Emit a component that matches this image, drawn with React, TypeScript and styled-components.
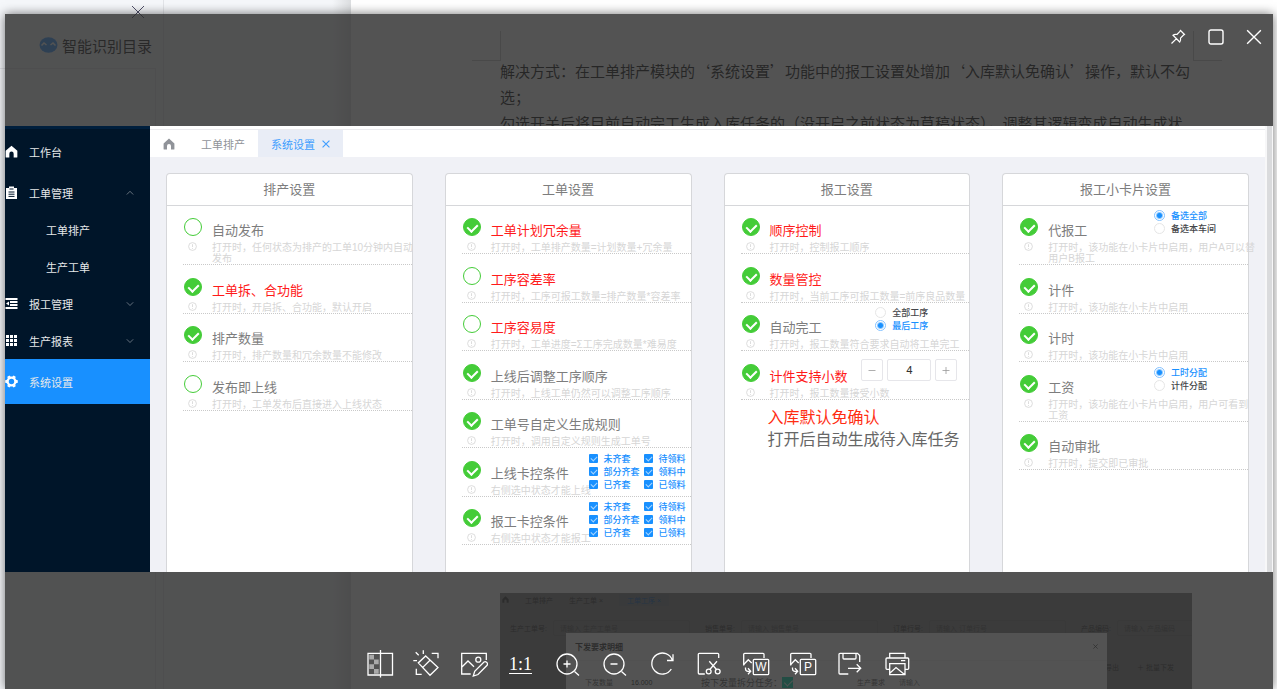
import React, { useState } from "react";
import styled, { createGlobalStyle, css } from "styled-components";

const GlobalStyle = createGlobalStyle`
  * { box-sizing: border-box; }
  body {
    margin: 0;
    background: #fff;
    font-family: "Liberation Sans", "Noto Sans CJK SC", sans-serif;
    overflow: hidden;
  }
  button, input { font: inherit; margin: 0; padding: 0; }
  button { border: 0; background: none; color: inherit; cursor: pointer; }
  h2, p, ul { margin: 0; padding: 0; font-weight: 400; }
  ul { list-style: none; }
`;

/* ---------- document editor behind the viewer ---------- */

const Screen = styled.div`
  position: relative;
  height: 100vh;
  overflow: hidden;
`;

const Editor = styled.div`
  display: flex;
  height: 100%;
`;

const Outline = styled.aside`
  flex: 0 0 164px;
  display: flex;
  flex-direction: column;
  background: #f5f7fa;
  border-right: 1px solid #e2e4e8;
`;

const OutlineTop = styled.div`
  height: 24px;
  display: flex;
  justify-content: flex-end;
  align-items: center;
  padding-right: 18px;
  color: #50506a;
  button { height: 14px; line-height: 0; }
`;

const OutlineHead = styled.div`
  height: 44px;
  display: flex;
  align-items: center;
  gap: 4px;
  padding: 0 0 2px 39px;
  font-size: 15px;
  color: #222;
`;

const OutlineBody = styled.div`
  flex: 1;
  margin-right: 7px;
  border-top: 1px solid #e2e4e8;
  border-right: 1px solid #e2e4e8;
`;

const Gutter = styled.div`
  flex: 0 0 187px;
  background: linear-gradient(to right, #f5f7fa 90%, #dcdee0);
`;

const Page = styled.article`
  flex: 1;
  min-width: 0;
  display: flex;
  flex-direction: column;
  justify-content: space-between;
  padding: 31px 85px 0 149px;
  background: #fff;
`;

const PageMarks = styled.div`
  display: flex;
  justify-content: space-between;
  height: 30px;
  margin: 0 -30px 0 -28px;
`;

const Mark = styled.span<{ $side: "left" | "right" }>`
  width: 29px;
  border-bottom: 1px solid #c8c8c8;
  ${(p) => (p.$side === "left" ? "border-right" : "border-left")}: 1px solid #c8c8c8;
`;

const DocText = styled.p`
  font: 15px/26px "Noto Sans CJK SC", sans-serif;
  color: #111;
  white-space: nowrap;
  margin-top: -3px;
`;

const Shot = styled.div`
  position: relative;
  height: 96px;
  overflow: hidden;
  background: #808080;
  font-size: 7px;
  color: #303030;
`;

const ShotTabs = styled.div`
  display: flex;
  align-items: center;
  height: 13px;
  padding-left: 2px;
  gap: 16px;
  span:last-child {
    padding: 1px 8px;
    color: #0c5cb0;
    background: #777b80;
  }
`;

const ShotForm = styled.div`
  display: grid;
  grid-template-columns: repeat(4, 188px);
  padding: 14px 0 0 3px;
`;

const ShotField = styled.label`
  display: flex;
  align-items: center;
  gap: 6px;
  span { width: 44px; text-align: right; }
  input {
    width: 137px;
    height: 16px;
    padding-left: 6px;
    border: 1px solid #747474;
    background: transparent;
    border-radius: 2px;
  }
  input::placeholder { color: #505050; }
`;

const ShotActions = styled.div`
  display: flex;
  justify-content: flex-end;
  gap: 18px;
  padding: 26px 18px 0 0;
`;

const Modal = styled.div`
  position: absolute;
  top: 40px;
  left: 66px;
  right: 85px;
  height: 80px;
  background: #fff;
`;

const ModalHead = styled.div`
  display: flex;
  justify-content: space-between;
  align-items: center;
  height: 28px;
  padding: 0 9px;
  border-bottom: 1px solid #f2f2f2;
  font-size: 8px;
  font-weight: 700;
  color: #333;
`;

const ModalBody = styled.div`
  display: flex;
  align-items: center;
  height: 42px;
  padding-left: 19px;
  color: #555;
`;

const ModalField = styled.label<{ $gap: number }>`
  display: flex;
  align-items: center;
  gap: ${(p) => p.$gap}px;
  input[type="text"] {
    width: 50px;
    border: 0;
    background: none;
    color: #222;
  }
`;

const SplitField = styled.label`
  display: flex;
  align-items: center;
  gap: 0;
  margin: 0 64px 0 20px;
  font-size: 9px;
  input {
    appearance: none;
    position: relative;
    width: 11px;
    height: 11px;
    background: #00e0b0;
  }
  input::after {
    content: "";
    position: absolute;
    left: 4px;
    top: 1px;
    width: 4px;
    height: 7px;
    border: solid #fff;
    border-width: 0 1px 1px 0;
    transform: rotate(45deg);
  }
`;

/* ---------- picture viewer ---------- */

const Viewer = styled.section`
  position: absolute;
  inset: 14px 4px 0 5px;
  display: flex;
  flex-direction: column;
  background: rgba(43, 43, 43, 0.81);
  box-shadow: 0 0 10px rgba(0, 0, 0, 0.55);
`;

const WindowBar = styled.header`
  flex: 0 0 112px;
  display: flex;
  justify-content: flex-end;
  align-items: flex-start;
  gap: 14px;
  padding: 11px 7px 0;
  color: #fff;
`;

const WindowButton = styled.button`
  width: 24px;
  height: 24px;
  display: grid;
  place-items: center;
`;

const ToolBar = styled.footer`
  flex: 0 0 117px;
  display: flex;
  justify-content: center;
  gap: 19px;
  padding: 78px 2px 0 0;
  color: #fff;
`;

const ToolButton = styled.button`
  width: 28px;
  height: 28px;
  display: grid;
  place-items: center;
`;

const Ratio = styled.span`
  font: 18px/18px "Liberation Serif", serif;
  border-bottom: 1px solid #fff;
`;

/* ---------- picture content: production system ---------- */

const Picture = styled.div`
  flex: 1;
  min-height: 0;
  display: flex;
  overflow: hidden;
  background: #fff;
`;

const SideNav = styled.nav`
  flex: 0 0 145px;
  background: #001529;
  border-top: 3px solid #001f3d;
`;

const NavItem = styled.a<{ $tall?: boolean; $sub?: boolean; $active?: boolean }>`
  display: flex;
  align-items: center;
  height: ${(p) => (p.$tall ? 45 : 37)}px;
  padding: 0 16px 0 ${(p) => (p.$sub ? 41 : 0)}px;
  font-size: 11px;
  color: #e6e8ea;
  text-decoration: none;
  background: ${(p) => (p.$active ? "#1890ff" : "transparent")};
`;

const NavIcon = styled.span`
  width: 24px;
  line-height: 0;
  color: #fff;
`;

const NavLabel = styled.span`
  flex: 1;
`;

const Main = styled.main`
  flex: 1;
  min-width: 0;
  display: flex;
  flex-direction: column;
  background: #f0f1f6;
`;

const TabBar = styled.div`
  flex: 0 0 31px;
  display: flex;
  align-items: stretch;
  background: #fff;
  padding-top: 3px;
  font-size: 11px;
  color: #909399;
`;

const Tab = styled.button<{ $active?: boolean }>`
  display: flex;
  align-items: center;
  gap: 7px;
  padding: 0 13px;
  border-top: 1px solid #ebebee;
  color: ${(p) => (p.$active ? "#409eff" : "#909399")};
  background: ${(p) => (p.$active ? "#e9edf6" : "#fff")};
`;

const TabFill = styled.span`
  flex: 1;
  border-top: 1px solid #ebebee;
`;

const Cards = styled.div`
  flex: 1;
  min-height: 0;
  display: grid;
  grid-template-columns: repeat(4, minmax(0, 1fr));
  gap: 32px;
  padding: 16px 16px 0;
`;

const Card = styled.section`
  background: #fff;
  border: 1px solid #d6d7da;
  border-bottom: 0;
  border-radius: 4px 4px 0 0;
`;

const CardTitle = styled.h2`
  height: 32px;
  line-height: 31px;
  text-align: center;
  font-size: 13px;
  color: #7d7d7d;
  border-bottom: 1px solid #d6d7da;
`;

const Setting = styled.li`
  display: grid;
  grid-template-columns: 29px 1fr auto;
  grid-template-rows: 36px auto;
  margin-left: 16px;
  border-bottom: 1px dotted #c9c9c9;
  &:nth-child(even) { padding-top: 1px; }
`;

const Toggle = styled.input`
  appearance: none;
  position: relative;
  width: 18px;
  height: 18px;
  margin: 12px 0 0 1px;
  border: 1px solid #44cc38;
  border-radius: 50%;
  &:checked { background: #44cc38; }
  &:checked::after {
    content: "";
    position: absolute;
    left: 5px;
    top: 3px;
    width: 5px;
    height: 8px;
    border: solid #fff;
    border-width: 0 2px 2px 0;
    transform: rotate(45deg);
  }
`;

const SettingName = styled.label<{ $red?: boolean }>`
  padding-top: 16px;
  font-size: 13px;
  line-height: 17px;
  white-space: nowrap;
  color: ${(p) => (p.$red ? "#ff1a1a" : "#7d7d7d")};
`;

const InfoMark = styled.span`
  grid-column: 1;
  grid-row: 2;
  padding-left: 5px;
  line-height: 0;
  color: #d4d4d4;
`;

const Hint = styled.p`
  grid-column: 2 / -1;
  grid-row: 2;
  font-size: 10px;
  line-height: 11px;
  white-space: pre;
  color: #d6d6d6;
`;

const Extra = styled.div<{ $right: number }>`
  grid-column: 3;
  grid-row: 1 / 3;
  align-self: start;
  padding: 3px ${(p) => p.$right}px 0 0;
`;

const OptionLabel = styled.label<{ $on?: boolean }>`
  display: flex;
  align-items: center;
  gap: 6px;
  height: 13px;
  font-size: 9px;
  font-weight: 500;
  white-space: nowrap;
  color: ${(p) => (p.$on ? "#1890ff" : "#45464a")};
`;

const optionBox = css`
  appearance: none;
  flex: none;
  position: relative;
`;

const Radio = styled.input`
  ${optionBox}
  width: 11px;
  height: 11px;
  border: 1px solid #e6e6e6;
  border-radius: 50%;
  background: #fff;
  &:checked {
    border-color: #84c2ff;
    background: radial-gradient(circle, #1890ff 2px, #fff 4px);
  }
`;

const Check = styled.input`
  ${optionBox}
  width: 9px;
  height: 9px;
  border-radius: 1px;
  background: #1890ff;
  &::after {
    content: "";
    position: absolute;
    left: 3px;
    top: 1px;
    width: 3px;
    height: 5px;
    border: solid #a8d6ff;
    border-width: 0 1px 1px 0;
    transform: rotate(45deg);
  }
`;

const CheckGrid = styled.div`
  display: grid;
  grid-template-columns: 55px 43px;
`;

const Stepper = styled.div`
  display: flex;
  gap: 4px;
  padding-top: 4px;
`;

const StepButton = styled.button`
  width: 22px;
  height: 22px;
  display: grid;
  place-items: center;
  color: #999;
  border: 1px solid #e6e6ea;
  border-radius: 2px;
`;

const StepValue = styled.input`
  width: 44px;
  height: 22px;
  text-align: center;
  font-family: Roboto, sans-serif;
  font-size: 11px;
  color: #333;
  border: 1px solid #e6e6ea;
  border-radius: 2px;
`;

const Note = styled.p`
  padding: 7px 0 0 43px;
  font-size: 16px;
  line-height: 22px;
  white-space: nowrap;
  color: #666;
  strong { display: block; font-weight: 400; color: #ff2d12; }
`;

const ScrollTrack = styled.div`
  flex: 0 0 8px;
  border: solid #f7f7f8;
  border-width: 0 1px 0 2px;
  background: #dadbdd;
`;

/* ---------- icons ---------- */

const Svg = ({ size, box, children, width = 1.3 }: { size: number; box?: number; width?: number; children: React.ReactNode }) => (
  <svg width={size} height={size} viewBox={`0 0 ${box ?? size} ${box ?? size}`} fill="none" stroke="currentColor" strokeWidth={width} aria-hidden="true">
    {children}
  </svg>
);

const HomeIcon = ({ size }: { size: number }) => (
  <Svg size={size} box={12}>
    <path d="M6 .6 11.4 5.4V11a.6.6 0 0 1-.6.6H8V8a2 2 0 0 0-4 0v3.600H1.200A.6.6 0 0 1 .6 11V5.400Z" fill="currentColor" stroke="none" />
  </Svg>
);

const ClipboardIcon = () => (
  <Svg size={13}>
    <path d="M1 2h3V.5h5V2h3v11H1Z" fill="currentColor" stroke="none" />
    <path d="M4.500 3h4M3.500 6h6M3.500 8.200h6M3.500 10.400h6" stroke="#001529" strokeWidth="1" />
  </Svg>
);

const OutdentIcon = () => (
  <Svg size={13} width={1.8}>
    <path d="M.5 2h12M5 5h7.500M5 8h7.500M.5 11h12" />
    <path d="M1 6.500 4 4.500v4Z" fill="currentColor" stroke="none" />
  </Svg>
);

const GridIcon = () => (
  <Svg size={13}>
    {[1, 5, 9].map((x) => [1, 5, 9].map((y) => <rect key={`${x}-${y}`} x={x} y={y} width="3" height="3" fill="currentColor" stroke="none" />))}
  </Svg>
);

const GearIcon = () => (
  <Svg size={13}>
    <circle cx="6.500" cy="6.500" r="3.800" strokeWidth="2.200" />
    {[0, 60, 120, 180, 240, 300].map((a) => (
      <path key={a} d="M4.800 2 5.300.2h2.400L8.200 2Z" fill="currentColor" stroke="none" transform={`rotate(${a + 30} 6.500 6.500)`} />
    ))}
  </Svg>
);

const Chevron = ({ up }: { up?: boolean }) => (
  <Svg size={8} width={0.8}>
    <path d={up ? "M.8 5.500 4 2.300 7.200 5.500" : "M.8 2.300 4 5.500 7.200 2.300"} opacity=".55" />
  </Svg>
);

const Cross = ({ size, width }: { size: number; width: number }) => (
  <Svg size={size} box={14} width={width}>
    <path d="M1 1 13 13M13 1 1 13" />
  </Svg>
);

const RobotIcon = () => (
  <svg width="19" height="16" viewBox="0 0 19 16" aria-hidden="true">
    <ellipse cx="9.500" cy="8" rx="9" ry="7.800" fill="#3a9cff" />
    <path d="M2.500 8.500 5 6l2.500 2M11.500 8 14 6l2.500 2.500" stroke="#fff" strokeWidth="1.500" fill="none" />
  </svg>
);

const InfoIcon = () => (
  <Svg size={9} width={0.8}>
    <circle cx="4.500" cy="4.500" r="3.900" />
    <path d="M4.500 2.200V5M4.500 6v.9" />
  </Svg>
);

const exportFrame = (
  <>
    <path d="M22 8V4.300a1 1 0 0 0-1-1H2.700a1 1 0 0 0-1 1V15.500" />
    <path d="M1.700 14.500 6.300 9.700 9.700 13M3.500 17.500v1.300a2.500 2.500 0 0 0 2.500 2.500h2.300M6 18.300 8.700 21.300 6 24.300" />
    <rect x="11.300" y="9.300" width="15.400" height="15.400" rx="1" />
  </>
);

const exportLetter = (letter: string) => (
  <>
    {exportFrame}
    <text x="19" y="21.300" textAnchor="middle" fontFamily="Liberation Sans, sans-serif" fontSize="12" fill="currentColor" stroke="none">
      {letter}
    </text>
  </>
);

const tools: { name: string; art: React.ReactNode }[] = [
  {
    name: "对比",
    art: (
      <>
        <path d="M14 3.300H2V25h12M15 3.300h11.500V25H15M14.500 0v27.500" />
        <path d="M3.300 4.700H8v4.800H3.300ZM8 9.500h4.700v4.700H8ZM3.300 14.200H8V19H3.300ZM8 19h4.700v4.700H8Z" fill="#aaa" stroke="none" />
      </>
    ),
  },
  {
    name: "增强",
    art: (
      <path d="M12.700 6 25 17.500 17 25.300 5.300 12.900ZM17 10.200 9.800 17.400M10.300.2v3.700M2.700 2.300l3 3M.3 10.700H4M18.700 3.300H25v5M3.300 18.700v5.600h5.400" />
    ),
  },
  {
    name: "编辑",
    art: (
      <>
        <path d="M26.300 10V3.300H1.700V24h9M1.700 17.300 8 11l6 5.700" />
        <circle cx="18.300" cy="9.700" r="2.500" />
        <path d="M13.300 26 14.700 21.300 24 12q1.500-1 2.600.3 1.500 1.300.5 3L18 24.500Z" />
      </>
    ),
  },
  { name: "原始大小", art: null },
  {
    name: "放大",
    art: (
      <>
        <circle cx="13" cy="14" r="10" />
        <path d="M20.500 21.500 25 25.500M9.500 14h7M13 10.500v7" />
      </>
    ),
  },
  {
    name: "缩小",
    art: (
      <>
        <circle cx="13" cy="14" r="10" />
        <path d="M20.500 21.500 25 25.500M9.500 14h7" />
      </>
    ),
  },
  { name: "旋转", art: <path d="M24.300 10.300A10.500 10.500 0 1 0 23.300 19M25 4.300v6.200H19" /> },
  {
    name: "裁剪",
    art: (
      <>
        <path d="M23.700 8V4.300a1 1 0 0 0-1-1H4.300a1 1 0 0 0-1 1V23a1 1 0 0 0 1 1h5.500M14.300 11.300l7 8M22 11.300l-7 8" />
        <circle cx="13.700" cy="21.500" r="2.400" />
        <circle cx="22.700" cy="21.500" r="2.400" />
      </>
    ),
  },
  { name: "转为文字文档", art: exportLetter("W") },
  { name: "转为演示文档", art: exportLetter("P") },
  {
    name: "另存为",
    art: (
      <path d="M23.700 12V5.500L21.500 3.300H4a1 1 0 0 0-1 1V23a1 1 0 0 0 1 1h8.300M7 3.300V8a1 1 0 0 0 1 1h11a1 1 0 0 0 1-1V3.300M12 18.300h12.300M20.700 14.300l4 4-4 4" />
    ),
  },
  {
    name: "打印",
    art: (
      <path d="M6.700 8V3.300H22V8M6.700 19.300H4a1 1 0 0 1-1-1V9a1 1 0 0 1 1-1h20.700a1 1 0 0 1 1 1v9.300a1 1 0 0 1-1 1H22M6.700 13.700H22v11H6.700ZM7 23l6-5.500 8.500 7M18 10.700h4.300" />
    ),
  },
];

/* ---------- data ---------- */

type Item = {
  name: string;
  hint: string;
  on?: boolean;
  red?: boolean;
  radios?: [string, string];
  picked?: number;
  checks?: boolean;
  stepper?: boolean;
};

const stateChecks = ["未齐套", "待领料", "部分齐套", "领料中", "已齐套", "已领料"];

const groups: { title: string; items: Item[]; note?: [string, string] }[] = [
  {
    title: "排产设置",
    items: [
      { name: "自动发布", hint: "打开时，任何状态为排产的工单10分钟内自动\n发布" },
      { name: "工单拆、合功能", hint: "打开时，开启拆、合功能，默认开启", on: true, red: true },
      { name: "排产数量", hint: "打开时，排产数量和冗余数量不能修改", on: true },
      { name: "发布即上线", hint: "打开时，工单发布后直接进入上线状态" },
    ],
  },
  {
    title: "工单设置",
    items: [
      { name: "工单计划冗余量", hint: "打开时，工单排产数量=计划数量+冗余量", on: true, red: true },
      { name: "工序容差率", hint: "打开时，工序可报工数量=排产数量*容差率", red: true },
      { name: "工序容易度", hint: "打开时，工单进度=Σ工序完成数量*难易度", red: true },
      { name: "上线后调整工序顺序", hint: "打开时，上线工单仍然可以调整工序顺序", on: true },
      { name: "工单号自定义生成规则", hint: "打开时，调用自定义规则生成工单号", on: true },
      { name: "上线卡控条件", hint: "右侧选中状态才能上线", on: true, checks: true },
      { name: "报工卡控条件", hint: "右侧选中状态才能报工", on: true, checks: true },
    ],
  },
  {
    title: "报工设置",
    items: [
      { name: "顺序控制", hint: "打开时，控制报工顺序", on: true, red: true },
      { name: "数量管控", hint: "打开时，当前工序可报工数量=前序良品数量", on: true, red: true },
      { name: "自动完工", hint: "打开时，报工数量符合要求自动将工单完工", on: true, radios: ["全部工序", "最后工序"], picked: 1 },
      { name: "计件支持小数", hint: "打开时，报工数量接受小数", on: true, red: true, stepper: true },
    ],
    note: ["入库默认免确认", "打开后自动生成待入库任务"],
  },
  {
    title: "报工小卡片设置",
    items: [
      { name: "代报工", hint: "打开时，该功能在小卡片中启用，用户A可以替\n用户B报工", on: true, radios: ["备选全部", "备选本车间"], picked: 0 },
      { name: "计件", hint: "打开时，该功能在小卡片中启用", on: true },
      { name: "计时", hint: "打开时，该功能在小卡片中启用", on: true },
      { name: "工资", hint: "打开时，该功能在小卡片中启用，用户可看到\n工资", on: true, radios: ["工时分配", "计件分配"], picked: 0 },
      { name: "自动审批", hint: "打开时，提交即已审批", on: true },
    ],
  },
];

const RadioBox = styled.div`
  width: 94px;
`;

const RadioPair = ({ name, labels, initial }: { name: string; labels: [string, string]; initial: number }) => {
  const [picked, setPicked] = useState(initial);
  return (
    <RadioBox>
      {labels.map((label, i) => (
        <OptionLabel key={label} $on={picked === i}>
          <Radio type="radio" name={name} checked={picked === i} onChange={() => setPicked(i)} />
          {label}
        </OptionLabel>
      ))}
    </RadioBox>
  );
};

const CountStepper = () => {
  const [value, setValue] = useState(4);
  return (
    <Stepper>
      <StepButton aria-label="减少" onClick={() => setValue(value - 1)}>
        <Svg size={8} width={0.8}><path d="M.5 4.500h7" /></Svg>
      </StepButton>
      <StepValue aria-label="小数位数" value={value} onChange={(e) => setValue(Number(e.target.value) || 0)} />
      <StepButton aria-label="增加" onClick={() => setValue(value + 1)}>
        <Svg size={8} width={0.8}><path d="M.5 4.500h7M4 1v7" /></Svg>
      </StepButton>
    </Stepper>
  );
};

const SettingRow = ({ item, id }: { item: Item; id: string }) => (
  <Setting>
    <Toggle type="checkbox" id={id} defaultChecked={item.on} />
    <SettingName htmlFor={id} $red={item.red}>{item.name}</SettingName>
    <InfoMark><InfoIcon /></InfoMark>
    <Hint>{item.hint}</Hint>
    {item.radios && (
      <Extra $right={0}>
        <RadioPair name={id + "-mode"} labels={item.radios} initial={item.picked ?? 0} />
      </Extra>
    )}
    {item.checks && (
      <Extra $right={4}>
        <CheckGrid>
          {stateChecks.map((label) => (
            <OptionLabel key={label} $on>
              <Check type="checkbox" defaultChecked />
              {label}
            </OptionLabel>
          ))}
        </CheckGrid>
      </Extra>
    )}
    {item.stepper && (
      <Extra $right={12}>
        <CountStepper />
      </Extra>
    )}
  </Setting>
);

const EditorLayer = () => (
  <Editor lang="zh-CN">
    <Outline>
      <OutlineTop>
        <button aria-label="关闭目录"><Cross size={14} width={1} /></button>
      </OutlineTop>
      <OutlineHead><RobotIcon />智能识别目录</OutlineHead>
      <OutlineBody />
    </Outline>
    <Gutter />
    <Page>
      <div>
        <PageMarks><Mark $side="left" /><Mark $side="right" /></PageMarks>
        <DocText>
          解决方式：在工单排产模块的‘系统设置’功能中的报工设置处增加‘入库默认免确认’操作，默认不勾
          <br />选；<br />
          勾选开关后将目前自动完工生成入库任务的（没开启之前状态为草稿状态），调整其逻辑变成自动生成状
        </DocText>
      </div>
      <Shot>
        <ShotTabs>
          <HomeIcon size={7} />
          <span>工单排产</span>
          <span>生产工单 ×</span>
          <span>工单工序 ×</span>
        </ShotTabs>
        <ShotForm>
          {["生产工单号", "销售单号", "订单行号", "产品编码"].map((label) => (
            <ShotField key={label}>
              <span>{label}:</span>
              <input type="text" placeholder={`请输入 ${label}`} />
            </ShotField>
          ))}
        </ShotForm>
        <ShotActions>
          <button>导出</button>
          <button>＋ 批量下发</button>
        </ShotActions>
        <Modal>
          <ModalHead>下发要求明细<button aria-label="关闭"><Cross size={5} width={2} /></button></ModalHead>
          <ModalBody>
            <ModalField $gap={18}>下发数量<input type="text" defaultValue="16.000" /></ModalField>
            <SplitField>按下发量拆分任务：<input type="checkbox" defaultChecked /></SplitField>
            <ModalField $gap={14}>生产要求<input type="text" placeholder="请输入" /></ModalField>
          </ModalBody>
        </Modal>
      </Shot>
    </Page>
  </Editor>
);

const System = () => (
  <Picture>
    <SideNav>
      <NavItem href="#home" $tall><NavIcon><HomeIcon size={13} /></NavIcon><NavLabel>工作台</NavLabel></NavItem>
      <NavItem href="#orders"><NavIcon><ClipboardIcon /></NavIcon><NavLabel>工单管理</NavLabel><Chevron up /></NavItem>
      <NavItem href="#plan" $sub>工单排产</NavItem>
      <NavItem href="#work" $sub>生产工单</NavItem>
      <NavItem href="#report"><NavIcon><OutdentIcon /></NavIcon><NavLabel>报工管理</NavLabel><Chevron /></NavItem>
      <NavItem href="#sheets"><NavIcon><GridIcon /></NavIcon><NavLabel>生产报表</NavLabel><Chevron /></NavItem>
      <NavItem href="#settings" $tall $active><NavIcon><GearIcon /></NavIcon><NavLabel>系统设置</NavLabel></NavItem>
    </SideNav>
    <Main>
      <TabBar>
        <Tab aria-label="首页"><HomeIcon size={12} /></Tab>
        <Tab>工单排产</Tab>
        <Tab $active>系统设置<Cross size={8} width={2} /></Tab>
        <TabFill />
      </TabBar>
      <Cards>
        {groups.map((group, g) => (
          <Card key={group.title}>
            <CardTitle>{group.title}</CardTitle>
            <ul>
              {group.items.map((item, i) => (
                <SettingRow key={item.name} item={item} id={`setting-${g}-${i}`} />
              ))}
            </ul>
            {group.note && <Note><strong>{group.note[0]}</strong>{group.note[1]}</Note>}
          </Card>
        ))}
      </Cards>
    </Main>
    <ScrollTrack />
  </Picture>
);

export default function App() {
  return (
    <>
      <GlobalStyle />
      <Screen lang="zh-CN">
        <EditorLayer />
        <Viewer>
          <WindowBar>
            <WindowButton aria-label="置顶">
              <Svg size={16} width={1.2}>
                <path d="M10.500 1.500 14.500 5.500 13.300 6.300 10.500 9.100Q11 11.500 9.800 13L3 6.200Q4.500 5 6.900 5.500L9.700 2.700ZM6.200 9.800 1.500 14.500" />
              </Svg>
            </WindowButton>
            <WindowButton aria-label="最大化">
              <Svg size={16} width={1.4}><rect x="1" y="1" width="14" height="14" rx="2" /></Svg>
            </WindowButton>
            <WindowButton aria-label="关闭"><Cross size={16} width={1.2} /></WindowButton>
          </WindowBar>
          <System />
          <ToolBar>
            {tools.map((tool) => (
              <ToolButton key={tool.name} aria-label={tool.name}>
                {tool.art ? <Svg size={28}>{tool.art}</Svg> : <Ratio>1:1</Ratio>}
              </ToolButton>
            ))}
          </ToolBar>
        </Viewer>
      </Screen>
    </>
  );
}
